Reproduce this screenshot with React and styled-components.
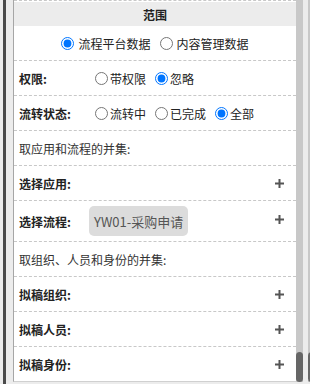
import styled, { createGlobalStyle } from 'styled-components';

// 전역 스타일
const GlobalStyle = createGlobalStyle`
  body {
    margin: 0;
    background: #ececec;
    font-family: "Noto Sans CJK SC", "Noto Sans", sans-serif;
  }
`;

// 페이지 레이아웃 (왼쪽 바, 패널, 스크롤바)
const Page = styled.div`
  display: flex;
  height: 384px;
  padding-left: 3px;
  overflow: hidden;

  & > * {
    flex-shrink: 0;
  }
`;

const LeftBar = styled.div`
  width: 3px;
  height: 100%;
  margin-right: 7px;
  background: #4a4a4a;
`;

const Panel = styled.div`
  width: 282px;
  height: 381px;
  display: flex;
  flex-direction: column;
  background: #fff;
  border-left: 1px solid #a6a6a6;
  border-bottom: 1px solid #d0d0d0;
  overflow: hidden;
`;

const TopEdge = styled.div`
  flex-shrink: 0;
  height: 1px;
  border-top: 1px dashed #c8c8c8;
`;

const Header = styled.div`
  flex-shrink: 0;
  height: 24px;
  display: flex;
  align-items: center;
  justify-content: center;
  background: #ececec;
  font-size: 12px;
  font-weight: bold;
  color: #222;
`;

// 행 스타일
const Row = styled.div`
  flex-shrink: 0;
  display: flex;
  align-items: center;
  justify-content: ${p => (p.$center ? 'center' : 'flex-start')};
  height: ${p => p.$height || 34}px;
  padding: ${p => (p.$center ? '0' : '0 12px 0 5px')};
  border-bottom: ${p => (p.$last ? 'none' : '1px dashed #c8c8c8')};
  font-size: 12px;
  color: #222;
`;

const Label = styled.span`
  width: 70px;
  flex-shrink: 0;
  font-weight: bold;
  white-space: nowrap;
`;

const Note = styled.span`
  color: #333;
`;

const Options = styled.div`
  display: flex;
  align-items: center;
  gap: 9px;
`;

const Option = styled.label`
  display: flex;
  align-items: center;
  gap: ${p => (p.$wide ? 4 : 2)}px;
  white-space: nowrap;
`;

const Radio = styled.input`
  width: 13px;
  height: 13px;
  margin: 0 0 0 ${p => (p.$first ? 6 : 0)}px;
`;

const Tag = styled.span`
  height: 30px;
  display: flex;
  align-items: center;
  padding: 0 5px;
  border-radius: 5px;
  background: #dcdcdc;
  color: #555;
  font-size: 13px;
`;

const Plus = styled.span`
  margin-left: auto;
  display: flex;
  align-items: center;
  align-self: ${p => (p.$top ? 'flex-start' : 'center')};
  margin-top: ${p => (p.$top ? 14 : 0)}px;
`;

// 스크롤바
const Track = styled.div`
  width: 7px;
  height: 382px;
  display: flex;
  flex-direction: column;
  justify-content: flex-end;
  background: #c8c8c8;
  margin-left: ${p => p.$gap || 0}px;
`;

const Thumb = styled.div`
  height: 30px;
  border-radius: 4px;
  background: #666;
`;

const PlusIcon = () => (
  <svg width="9" height="9" viewBox="0 0 9 9">
    <rect x="3.5" y="0" width="2" height="9" fill="#555" />
    <rect x="0" y="3.5" width="9" height="2" fill="#555" />
  </svg>
);

const RadioGroup = ({ name, items, checked, wide }) => (
  <Options>
    {items.map((item, i) => (
      <Option key={item} $wide={wide}>
        <Radio type="radio" name={name} $first={i === 0 && !wide} defaultChecked={item === checked} />
        {item}
      </Option>
    ))}
  </Options>
);

const PickRow = ({ label, last }) => (
  <Row $last={last}>
    <Label>{label}</Label>
    <Plus><PlusIcon /></Plus>
  </Row>
);

export default function App() {
  return (
    <>
      <GlobalStyle />
      <Page>
        <LeftBar />
        <Panel>
          <TopEdge />
          <Header>范围</Header>
          <Row $center>
            <RadioGroup name="source" wide items={['流程平台数据', '内容管理数据']} checked="流程平台数据" />
          </Row>
          <Row>
            <Label>权限:</Label>
            <RadioGroup name="auth" items={['带权限', '忽略']} checked="忽略" />
          </Row>
          <Row>
            <Label>流转状态:</Label>
            <RadioGroup name="state" items={['流转中', '已完成', '全部']} checked="全部" />
          </Row>
          <Row><Note>取应用和流程的并集:</Note></Row>
          <PickRow label="选择应用:" />
          <Row $height={40}>
            <Label>选择流程:</Label>
            <Tag>YW01-采购申请</Tag>
            <Plus $top><PlusIcon /></Plus>
          </Row>
          <Row><Note>取组织、人员和身份的并集:</Note></Row>
          <PickRow label="拟稿组织:" />
          <PickRow label="拟稿人员:" />
          <PickRow label="拟稿身份:" last />
        </Panel>
        <Track><Thumb /></Track>
        <Track $gap={5}><Thumb /></Track>
      </Page>
    </>
  );
}
